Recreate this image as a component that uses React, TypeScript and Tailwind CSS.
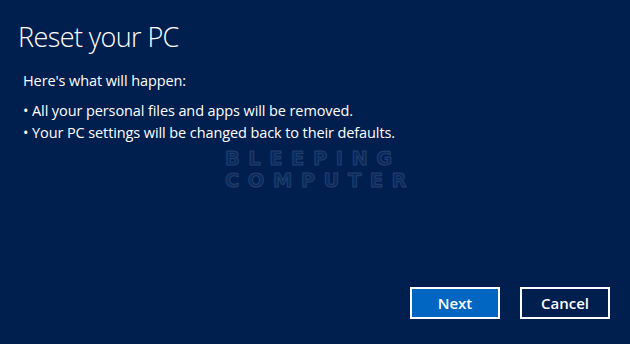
export default function App() {
  return (
    <div className="w-[630px] h-[344px] bg-[#001e4e] text-white flex flex-col font-['Open_Sans',sans-serif] overflow-hidden">
      <h1 className="pl-[18px] pt-[17px] text-[27px] font-light leading-[40px] tracking-[-0.6px]">Reset your PC</h1>
      <p className="pl-[23px] pt-[13px] text-[14.5px] leading-[22px] tracking-[-0.1px]">Here&apos;s what will happen:</p>
      <ul className="pl-[23px] pt-[8px] text-[14.5px] leading-[22px] tracking-[-0.1px]">
        <li>• All your personal files and apps will be removed.</li>
        <li>• Your PC settings will be changed back to their defaults.</li>
      </ul>
      <div className="pl-[225px] pt-[4px] font-['DejaVu_Sans',sans-serif] font-bold text-[19.5px] leading-[22px] tracking-[8.5px] text-[#0a2a5c] [-webkit-text-stroke:1px_#21406f]">
        <div>BLEEPING</div>
        <div>COMPUTER</div>
      </div>
      <div className="mt-auto mb-[25px] mr-[20px] flex justify-end gap-[20px]">
        <button className="w-[90px] h-[32px] border-2 border-white bg-[#0066c2] text-[15px] font-semibold">Next</button>
        <button className="w-[90px] h-[32px] border-2 border-white bg-[#001e4e] text-[15px] font-semibold">Cancel</button>
      </div>
    </div>
  )
}
